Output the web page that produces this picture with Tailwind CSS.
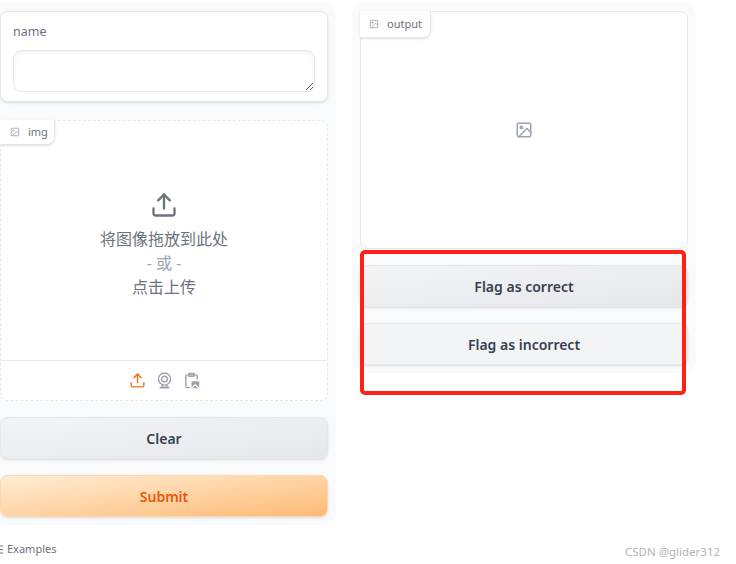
<!DOCTYPE html>
<html lang="zh">
<head>
<meta charset="utf-8">
<script src="https://cdn.jsdelivr.net/npm/@tailwindcss/browser@4"></script>
</head>
<body class="bg-white">
<div class="relative w-[736px] h-[564px] overflow-hidden bg-white font-['Noto_Sans','Noto_Sans_CJK_SC',sans-serif]">
  <div class="flex items-start gap-4 pt-[3px]">
    <!-- left column -->
    <div class="w-[336px] h-[522px] bg-[#f9fafb] rounded-r-xl pt-2 pr-[8px] flex flex-col gap-4 shrink-0">
      <div class="h-[91px] bg-white border border-[#e5e7eb] rounded-lg shadow-sm px-[12px] pt-[11px] flex flex-col gap-[9px]">
        <div class="text-[12.5px] leading-[18px] text-[#6b7280]">name</div>
        <textarea class="w-full h-[42px] shrink-0 border border-[#e5e7eb] rounded-lg bg-white shadow-inner block"></textarea>
      </div>
      <div class="relative h-[281px] bg-white border border-dashed border-[#e5e7eb] rounded-lg flex flex-col mt-[2px]">
        <div class="absolute -left-px -top-px h-[25px] w-[55px] bg-white border border-[#e5e7eb] border-l-0 border-t-0 rounded-br-lg shadow-sm flex items-center gap-[8px] pl-[10px] text-[11px] text-[#6b7280]">
          <svg width="10" height="10" viewBox="0 0 24 24" fill="none" stroke="#9ca3af" stroke-width="2"><rect x="3" y="3" width="18" height="18" rx="1"/><circle cx="8.5" cy="8.5" r="1.5"/><path d="M21 15l-5-5L5 21"/></svg>
          <span>img</span>
        </div>
        <div class="flex-1 flex flex-col items-center pt-[70px] text-[16px] leading-[24px] text-[#6b7280]">
          <svg width="28" height="28" viewBox="0 0 24 24" fill="none" stroke="#6b7280" stroke-width="2" stroke-linecap="round" stroke-linejoin="round" class="mb-[8px] -ml-[1px]"><path d="M21 15v4a2 2 0 0 1-2 2H5a2 2 0 0 1-2-2v-4"/><path d="M17 8l-5-5-5 5"/><path d="M12 3v12"/></svg>
          <div>将图像拖放到此处</div>
          <div class="text-[#9ca3af]">- 或 -</div>
          <div>点击上传</div>
        </div>
        <div class="h-[40px] shrink-0 border-t border-[#e5e7eb] flex items-center justify-center gap-[10px]">
          <svg width="17" height="17" viewBox="0 0 24 24" fill="none" stroke="#f97316" stroke-width="2" stroke-linecap="round" stroke-linejoin="round"><path d="M21 15v4a2 2 0 0 1-2 2H5a2 2 0 0 1-2-2v-4"/><path d="M17 8l-5-5-5 5"/><path d="M12 3v12"/></svg>
          <svg width="17" height="17" viewBox="0 0 24 24" fill="none" stroke="#9ca3af" stroke-width="2" stroke-linecap="round"><circle cx="12" cy="10" r="8.5"/><circle cx="12" cy="10" r="4"/><path d="M6 22h12M9 19v3M15 19v3" stroke-width="2.5"/></svg>
          <svg width="17" height="17" viewBox="0 0 24 24" fill="none" stroke="#9ca3af" stroke-width="2" stroke-linecap="round" stroke-linejoin="round"><path d="M9 22H6a2 2 0 0 1-2-2V6a2 2 0 0 1 2-2h12a2 2 0 0 1 2 2v4"/><rect x="8" y="2" width="8" height="4" rx="1"/><rect x="12" y="13" width="11" height="10" rx="1" fill="#9ca3af" stroke="none"/><path d="M13 22l4-4 5 4" stroke="#fff" stroke-width="1.5"/></svg>
        </div>
      </div>
      <button class="h-[42px] rounded-lg border border-[#e5e7eb] bg-gradient-to-br from-[#f3f4f6] to-[#e5e7eb] shadow-sm text-[14px] font-semibold text-[#374151]">Clear</button>
      <button class="h-[42px] rounded-lg border border-[#fed7aa] bg-gradient-to-br from-[#ffedd5] to-[#fdba74] shadow-sm text-[14px] font-semibold text-[#ea580c]">Submit</button>
    </div>
    <!-- right column -->
    <div class="w-[344px] h-[370px] bg-[#f9fafb] rounded-xl p-2 flex flex-col gap-4 shrink-0">
      <div class="relative h-[238px] bg-white border border-[#e5e7eb] rounded-lg flex items-center justify-center">
        <div class="absolute -left-px -top-px h-[27px] w-[71px] bg-white border-r border-b border-[#e5e7eb] rounded-br-lg shadow-sm flex items-center gap-[8px] pl-[9px] text-[11px] text-[#6b7280]">
          <svg width="10" height="10" viewBox="0 0 24 24" fill="none" stroke="#9ca3af" stroke-width="2"><rect x="3" y="3" width="18" height="18" rx="1"/><circle cx="8.5" cy="8.5" r="1.5"/><path d="M21 15l-5-5L5 21"/></svg>
          <span>output</span>
        </div>
        <svg width="18" height="18" viewBox="0 0 24 24" fill="none" stroke="#9ca3af" stroke-width="2" stroke-linecap="round" stroke-linejoin="round"><rect x="3" y="3" width="18" height="18" rx="2"/><circle cx="8.5" cy="8.5" r="1.5"/><path d="M21 15l-5-5L5 21"/></svg>
      </div>
      <button class="h-[42px] shrink-0 rounded-lg border border-[#e5e7eb] bg-gradient-to-br from-[#f3f4f6] to-[#e5e7eb] shadow-sm text-[14px] font-semibold text-[#374151]">Flag as correct</button>
      <button class="h-[42px] shrink-0 rounded-lg border border-[#e5e7eb] bg-[#f3f4f6] shadow-sm text-[14px] font-semibold text-[#374151]">Flag as incorrect</button>
    </div>
  </div>
  <!-- Red annotation -->
  <div class="absolute left-[360px] top-[250px] w-[326px] h-[145px] border-4 border-[#ff2018] rounded-[5px]"></div>
  <!-- Examples -->
  <div class="absolute left-0 top-[541px] flex items-center gap-[4px] text-[11px] leading-[16px] text-[#6b7280]">
    <svg width="3" height="9" viewBox="0 0 3 9"><path d="M0 1h3M0 4.5h3M0 8h3" stroke="#6b7280"/></svg>
    <span>Examples</span>
  </div>
  <!-- Watermark -->
  <div class="absolute left-[625px] top-[544px] text-[11.5px] leading-[16px] text-[#b4b4b4]">CSDN @glider312</div>
</div>
</body>
</html>
